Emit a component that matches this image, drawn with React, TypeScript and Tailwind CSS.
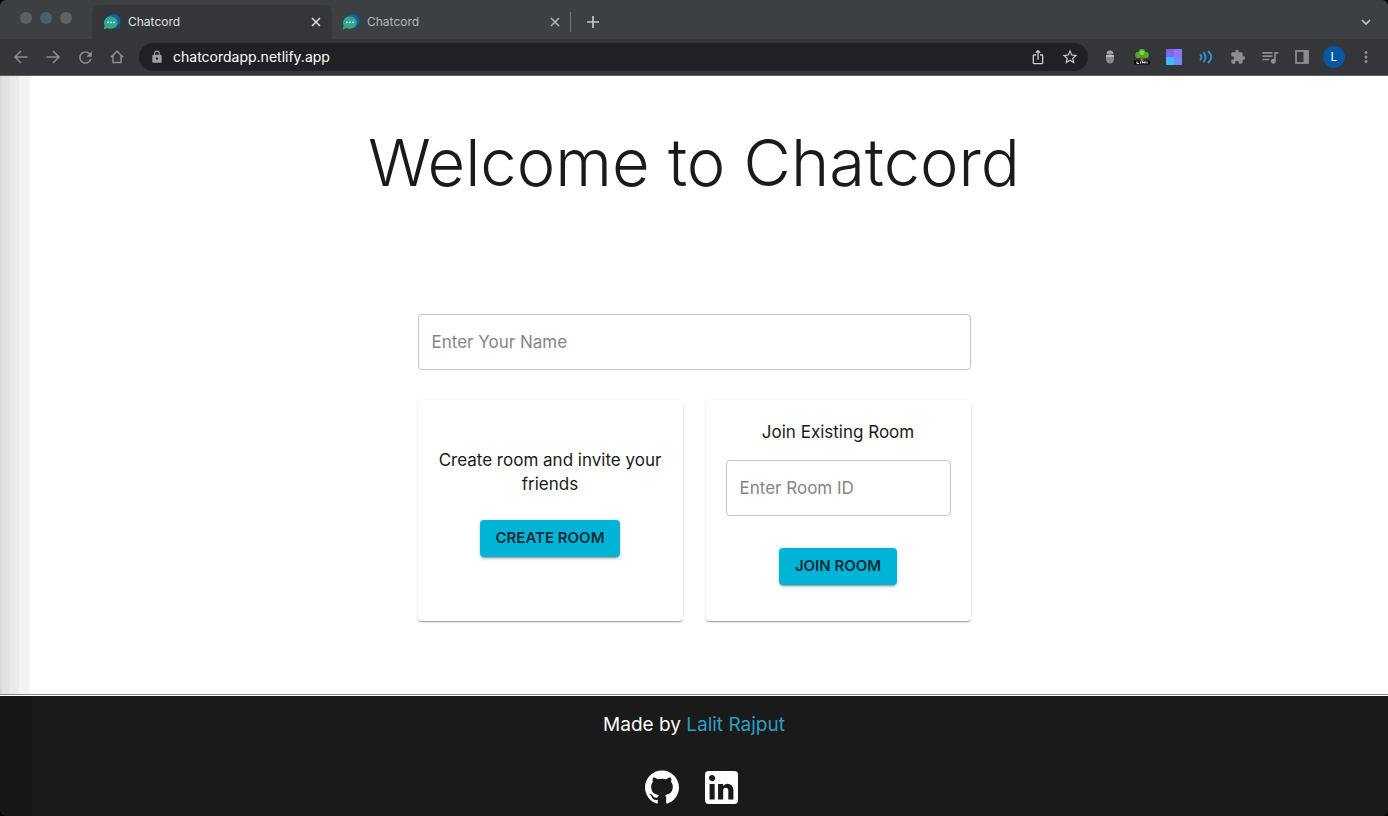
import type { ReactNode } from "react";
import {
  MdExtension,
  MdIosShare,
  MdLock,
  MdMoreVert,
  MdQueueMusic,
  MdRefresh,
  MdStarBorder,
} from "react-icons/md";
import { SiGithub } from "react-icons/si";

function ChatLogo() {
  return (
    <svg viewBox="0 0 18 18" className="size-[18px] shrink-0" aria-hidden="true">
      <circle cx="10.3" cy="8.2" r="7" fill="#12649f" />
      <path d="M16.5 11 17.3 16 12 15Z" fill="#0d4f80" />
      <path d="M7.8 3.400a6.600 6.200 0 1 1-3.200 11.500L0.800 16.400l.8-3.800A6.500 6.500 0 0 1 7.800 3.400Z" fill="#35a58c" />
      <g fill="#e8fffa">
        <circle cx="5" cy="9.300" r="0.9" />
        <circle cx="8" cy="9.300" r="0.9" />
        <circle cx="11" cy="9.300" r="0.9" />
      </g>
    </svg>
  );
}

function LineIcon({ children }: { children: ReactNode }) {
  return (
    <svg
      viewBox="0 0 16 16"
      className="size-4"
      fill="none"
      stroke="currentColor"
      strokeWidth="1.5"
      aria-hidden="true"
    >
      {children}
    </svg>
  );
}

function IconButton({ label, children }: { label: string; children: ReactNode }) {
  return (
    <button type="button" aria-label={label} className="flex size-8 items-center justify-center">
      {children}
    </button>
  );
}

function CloseButton() {
  return (
    <button type="button" aria-label="Close tab" className="flex size-4 items-center justify-center">
      <svg viewBox="0 0 10 10" className="size-[10px]" stroke="currentColor" strokeWidth="1.5" aria-hidden="true">
        <path d="M1 1 9 9M9 1 1 9" />
      </svg>
    </button>
  );
}

function TabStrip() {
  return (
    <div className="flex h-[39px] items-end bg-[#3c4043]">
      <div className="mr-5 flex gap-2 self-center pb-1 pl-5">
        <span className="size-3 rounded-full bg-[#5c5e60]" />
        <span className="size-3 rounded-full bg-[#4d6068]" />
        <span className="size-3 rounded-full bg-[#5f6162]" />
      </div>
      <div className="flex h-[34px] w-60 items-center rounded-t-lg bg-[#35363a] pr-2 pl-[11px] text-[#dfe1e5]">
        <ChatLogo />
        <span className="ml-[7px] flex-1 text-xs">Chatcord</span>
        <CloseButton />
      </div>
      <div className="flex h-[34px] w-[231px] items-center pr-0 pl-[10px] text-[#b4b7ba]">
        <ChatLogo />
        <span className="ml-[7px] flex-1 text-xs">Chatcord</span>
        <CloseButton />
      </div>
      <div className="mb-[7px] ml-[7px] h-5 w-px bg-[#77797c]" />
      <button type="button" aria-label="New tab" className="mb-[9px] ml-4 text-[#c4c6c8]">
        <svg viewBox="0 0 12 12" className="my-[2px] size-3" stroke="currentColor" strokeWidth="1.7" aria-hidden="true">
          <path d="M6 0V12M0 6H12" />
        </svg>
      </button>
      <button type="button" aria-label="Search tabs" className="mr-4 mb-[9px] ml-auto text-[#c4c6c8]">
        <svg viewBox="0 0 12 16" className="h-4 w-3" fill="none" stroke="currentColor" strokeWidth="1.6" aria-hidden="true">
          <path d="M2 6 6 10 10 6" />
        </svg>
      </button>
    </div>
  );
}

function Toolbar() {
  return (
    <div className="flex h-[37px] items-center border-b border-[#5b5b60] bg-[#35363a] pr-[6px] pl-[5px] text-[#8b8d90]">
      <IconButton label="Back">
        <LineIcon>
          <path d="M14.5 8H2M8 2 2 8l6 6" />
        </LineIcon>
      </IconButton>
      <IconButton label="Forward">
        <LineIcon>
          <path d="M1.500 8H14M8 2l6 6-6 6" />
        </LineIcon>
      </IconButton>
      <IconButton label="Reload">
        <MdRefresh className="size-[19px]" />
      </IconButton>
      <IconButton label="Home">
        <LineIcon>
          <path d="M4 6.500V13.500H12V6.500M1.800 8.300 8 2.300 14.200 8.300" />
        </LineIcon>
      </IconButton>
      <div className="mr-[6px] ml-[6px] flex h-7 flex-1 items-center rounded-full bg-[#202124] pr-[2px] pl-[11px]">
        <MdLock className="size-[14px] text-[#9aa0a6]" />
        <input
          type="text"
          aria-label="Address"
          defaultValue="chatcordapp.netlify.app"
          className="ml-[9px] min-w-0 flex-1 bg-transparent text-sm text-white outline-none"
        />
        <div className="flex text-[#c8cacd]">
          <IconButton label="Share">
            <MdIosShare className="size-4" />
          </IconButton>
          <IconButton label="Bookmark">
            <MdStarBorder className="size-[18px]" />
          </IconButton>
        </div>
      </div>
      <IconButton label="Private profile extension">
        <svg viewBox="0 0 12 16" className="h-4 w-3" aria-hidden="true">
          <path d="M2.500 4.800Q2.800 1.500 6 1.500T9.500 4.800Z" fill="#a9a9a9" />
          <path d="M2 6Q6 4.800 10 6V10A4 4.500 0 0 1 2 10Z" fill="#8a8a8a" />
          <path d="M2 6Q6 4.800 10 6V8H2Z" fill="#b9b9b9" />
        </svg>
      </IconButton>
      <IconButton label="Tree extension">
        <svg viewBox="0 0 16 16" className="size-4" aria-hidden="true">
          <rect y="11.500" width="16" height="4" fill="#0b0b0b" />
          <path d="M7 7H9L9.500 12.500H6.500Z" fill="#9c6a2c" />
          <g fill="#4bab2a">
            <circle cx="4.500" cy="6" r="3.300" />
            <circle cx="11.500" cy="6" r="3.300" />
            <circle cx="8" cy="3.500" r="3.400" />
          </g>
          <circle cx="8" cy="3.800" r="2.400" fill="#7fd058" />
          <path d="M3 12.500V14.500H5M6.500 12.500V14.500M8.500 14.500V12.500L9.800 14 11 12.500V14.500M13 12.500V14.500" fill="none" stroke="#fff" strokeWidth="1" />
        </svg>
      </IconButton>
      <IconButton label="Grid extension">
        <svg viewBox="0 0 16 16" className="size-4" aria-hidden="true">
          <rect width="16" height="16" rx="1" fill="#8064f4" />
          <path d="M8 0H15Q16 0 16 1V8H8Z" fill="#8f74f6" />
          <path d="M0 8H8V16H1Q0 16 0 15Z" fill="#38bdfa" />
          <path d="M8 8H16V15Q16 16 15 16H8Z" fill="#7087ff" />
        </svg>
      </IconButton>
      <IconButton label="Audio extension">
        <svg viewBox="0 0 16 16" className="size-4" fill="none" stroke="#3291dc" strokeWidth="1.900" strokeLinecap="round" aria-hidden="true">
          <path d="M2.500 6Q4.500 8 2.500 10.500M6 4Q9 8 6 12.500M10.500 2.500Q16 8 10.500 13.500" />
        </svg>
      </IconButton>
      <IconButton label="Extensions">
        <MdExtension className="size-4" />
      </IconButton>
      <IconButton label="Media controls">
        <MdQueueMusic className="size-5" />
      </IconButton>
      <IconButton label="Side panel">
        <svg viewBox="0 0 14 14" className="size-[14px]" aria-hidden="true">
          <rect x="1" y="1" width="12" height="12" fill="none" stroke="currentColor" strokeWidth="1.800" />
          <path d="M8.500 1H13V13H8.500Z" fill="currentColor" />
        </svg>
      </IconButton>
      <IconButton label="Profile">
        <span className="flex size-[22px] items-center justify-center rounded-full bg-[#0758a0] text-xs text-white">L</span>
      </IconButton>
      <IconButton label="Menu">
        <MdMoreVert className="size-[18px]" />
      </IconButton>
    </div>
  );
}

const cardClass =
  "flex flex-col items-center rounded-[4px] bg-white px-5 shadow-[0_2px_1px_-1px_rgba(0,0,0,0.2),0_1px_1px_rgba(0,0,0,0.14),0_1px_3px_rgba(0,0,0,0.12)]";
const fieldClass =
  "h-14 w-full rounded-[4px] border border-[#c4c4c4] bg-transparent px-[13px] text-[17px] text-[#1a1a1a] placeholder:text-[#858585] outline-none";
const buttonClass =
  "h-[37px] rounded-[4px] bg-[#00b4d8] px-4 text-[15px] font-semibold text-[#102c36] shadow-[0_3px_1px_-2px_rgba(0,0,0,0.2),0_2px_2px_rgba(0,0,0,0.14),0_1px_5px_rgba(0,0,0,0.12)]";

export default function App() {
  return (
    <div className="bg-black font-['Inter',sans-serif]">
      <div className="flex min-h-screen flex-col overflow-hidden rounded-md">
        <header>
          <TabStrip />
          <Toolbar />
        </header>
        <main className="flex-1 border-b border-[#8a8a8a] bg-white bg-[linear-gradient(to_right,#dadada_2px,#e3e3e3_2px,#e3e3e3_10px,#ebebeb_10px,#ebebeb_19px,#f3f3f3_19px,#f3f3f3_30px,#ffffff_30px)] px-8 pt-[51px] text-[#1a1a1a]">
          <h1 className="text-center text-[65px] leading-[72px] font-light">Welcome to Chatcord</h1>
          <form className="mx-auto mt-[115px] mb-8 max-w-[553px]" onSubmit={(e) => e.preventDefault()}>
            <input type="text" aria-label="Enter Your Name" placeholder="Enter Your Name" className={fieldClass} />
            <div className="mt-[30px] grid grid-cols-2 gap-[23px]">
              <section className={`${cardClass} justify-center pb-4`}>
                <p className="text-center text-[17px] leading-6">Create room and invite your friends</p>
                <button type="button" className={`${buttonClass} mt-6`}>
                  CREATE ROOM
                </button>
              </section>
              <section className={`${cardClass} pt-5 pb-9`}>
                <p className="text-center text-[17px] leading-6">Join Existing Room</p>
                <input type="text" aria-label="Enter Room ID" placeholder="Enter Room ID" className={`${fieldClass} mt-4`} />
                <button type="submit" className={`${buttonClass} mt-8`}>
                  JOIN ROOM
                </button>
              </section>
            </div>
          </form>
        </main>
        <footer className="border-t border-white bg-[linear-gradient(to_right,#161616_32px,#1a1a1a_32px)] pt-[17px] pb-3 text-center text-white">
          <p className="text-[19px] leading-6">
            Made by{" "}
            <a href="#author" className="text-[#2d9fc0]">
              Lalit Rajput
            </a>
          </p>
          <div className="mt-[33px] flex items-center justify-center gap-[26px] pr-[6px]">
            <a href="#github" aria-label="GitHub">
              <SiGithub className="size-[34px]" />
            </a>
            <a href="#linkedin" aria-label="LinkedIn">
              <svg viewBox="3 3 18 18" className="size-[33px]" fill="currentColor" aria-hidden="true">
                <path d="M19 3a2 2 0 0 1 2 2v14a2 2 0 0 1-2 2H5a2 2 0 0 1-2-2V5a2 2 0 0 1 2-2h14m-.5 15.500v-5.300a3.260 3.260 0 0 0-3.260-3.260c-.85 0-1.840.52-2.320 1.300v-1.110h-2.790v8.370h2.790v-4.930c0-.77.62-1.400 1.390-1.400a1.400 1.400 0 0 1 1.400 1.400v4.930h2.790M6.880 8.560a1.680 1.680 0 0 0 1.680-1.680c0-.93-.75-1.690-1.680-1.690a1.690 1.690 0 0 0-1.690 1.690c0 .93.76 1.680 1.690 1.680m1.390 9.940v-8.370H5.500v8.370h2.770z" />
              </svg>
            </a>
          </div>
        </footer>
      </div>
    </div>
  );
}
